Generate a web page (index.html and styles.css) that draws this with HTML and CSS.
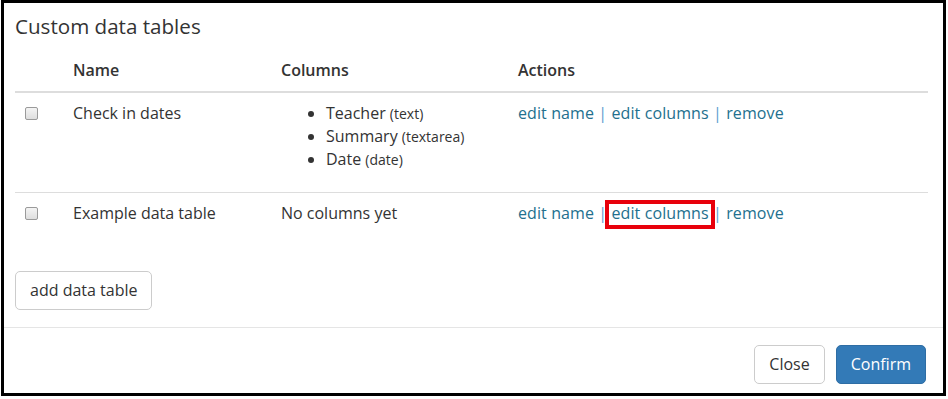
FILE: index.html
```html
<!DOCTYPE html>
<html>
<head>
<meta charset="utf-8">
<link rel="stylesheet" href="styles.css">
</head>
<body>
<div class="frame">
  <div class="modal-body">
    <h4 class="modal-title">Custom data tables</h4>
    <table class="data-table">
      <colgroup>
        <col class="col-check">
        <col class="col-name">
        <col class="col-columns">
        <col class="col-actions">
      </colgroup>
      <thead>
        <tr>
          <th></th>
          <th>Name</th>
          <th>Columns</th>
          <th>Actions</th>
        </tr>
      </thead>
      <tbody>
        <tr>
          <td><input type="checkbox" class="check"></td>
          <td>Check in dates</td>
          <td>
            <ul class="col-list">
              <li>Teacher <small>(text)</small></li>
              <li>Summary <small>(textarea)</small></li>
              <li>Date <small>(date)</small></li>
            </ul>
          </td>
          <td class="actions"><a href="#">edit name</a> <span class="sep">|</span> <a href="#">edit columns</a> <span class="sep">|</span> <a href="#">remove</a></td>
        </tr>
        <tr>
          <td><input type="checkbox" class="check"></td>
          <td>Example data table</td>
          <td>No columns yet</td>
          <td class="actions"><a href="#">edit name</a> <span class="sep">|</span> <a href="#" class="highlight">edit columns</a> <span class="sep">|</span> <a href="#">remove</a></td>
        </tr>
      </tbody>
    </table>
    <div class="add-row">
      <button class="btn btn-default">add data table</button>
    </div>
  </div>
  <div class="modal-footer">
    <button class="btn btn-default btn-close">Close</button>
    <button class="btn btn-primary">Confirm</button>
  </div>
</div>
</body>
</html>
```
FILE: styles.css
```css
html, body {
  margin: 0;
  padding: 0;
  background: #fff;
}

body {
  font-family: "Open Sans", "Liberation Sans", sans-serif;
  font-size: 16px;
  line-height: 23px;
  color: #333;
}

.frame {
  box-sizing: border-box;
  width: 945px;
  height: 396px;
  margin-left: 1px;
  border: 3px solid #000;
  overflow: hidden;
  display: flex;
  flex-direction: column;
}

.modal-body {
  padding: 0 15px 17px 11px;
}

.modal-title {
  margin: 0;
  padding-top: 9px;
  font-size: 20.6px;
  line-height: 29px;
  font-weight: 400;
  color: #333;
}

.data-table {
  margin-top: 9px;
  width: 100%;
  border-collapse: collapse;
  table-layout: fixed;
}

.col-check { width: 49px; }
.col-name { width: 208px; }
.col-columns { width: 237px; }

.data-table th {
  text-align: left;
  font-weight: 600;
  padding: 9px;
  border-bottom: 2px solid #ddd;
  vertical-align: bottom;
}

.data-table td {
  padding: 9px;
  vertical-align: top;
  border-top: 1px solid #ddd;
}

.data-table tbody tr:first-child td {
  border-top: 0;
}

.data-table td:first-child {
  padding-left: 10px;
}

.check {
  appearance: none;
  -webkit-appearance: none;
  display: block;
  width: 13px;
  height: 13px;
  margin: 5px 0 0 0;
  box-sizing: border-box;
  border: 1px solid #9a9a9a;
  border-radius: 2px;
  background: linear-gradient(#f4f4f4, #dedede);
}

.col-list {
  margin: 0 0 12px;
  padding-left: 45px;
}

.col-list small {
  font-size: 14px;
  line-height: 1;
}

.actions {
  letter-spacing: 0.1px;
}

.actions a {
  color: #23708e;
  text-decoration: none;
}

.sep {
  color: #5d9ccf;
}

.highlight {
  position: relative;
}

.highlight::after {
  content: "";
  position: absolute;
  left: -7px;
  right: -6px;
  top: -2px;
  bottom: -5px;
  border: 4px solid #e8000b;
}

.add-row {
  margin-top: 37px;
}

.btn {
  font-family: inherit;
  font-size: 16px;
  line-height: 23px;
  padding: 7px 14px;
  border: 1px solid #ccc;
  border-radius: 5px;
  background: #fff;
  color: #333;
  cursor: pointer;
  margin: 0;
}

.btn-primary {
  background: #337ab7;
  border-color: #2e6da4;
  color: #fff;
}

.modal-footer {
  border-top: 1px solid #e5e5e5;
  padding: 17px 17px;
  display: flex;
  justify-content: flex-end;
  gap: 11px;
}
```
